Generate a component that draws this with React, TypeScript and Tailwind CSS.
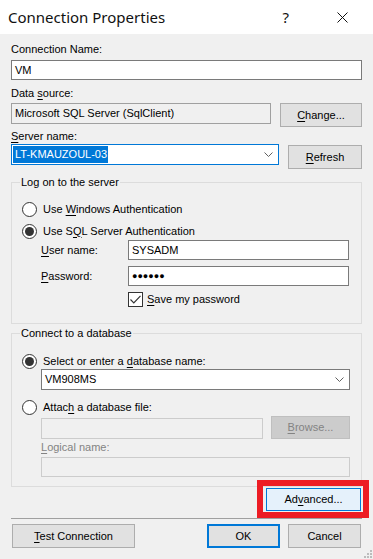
import React from 'react'

const U = ({ children }: { children: React.ReactNode }) => (
  <span className="underline underline-offset-[2px] decoration-1">{children}</span>
)

function Radio({ checked }: { checked?: boolean }) {
  return (
    <span className="w-[15px] h-[15px] rounded-full border border-[#333] bg-white flex items-center justify-center shrink-0">
      {checked && <span className="w-[9px] h-[9px] rounded-full bg-[#333]" />}
    </span>
  )
}

function Chevron() {
  return (
    <svg width="9" height="5" viewBox="0 0 9 5" className="shrink-0">
      <polyline points="0.5,0.5 4.5,4.5 8.5,0.5" fill="none" stroke="#606060" strokeWidth="1" />
    </svg>
  )
}

const btn =
  'h-[24px] bg-[#e1e1e1] border border-[#adadad] flex items-center justify-center shrink-0'

export default function App() {
  return (
    <div className="relative w-[373px] h-[559px] bg-[#f0f0f0] flex flex-col overflow-hidden text-black font-['Liberation_Sans',Arial,sans-serif] text-[11px] leading-[13px]">
      {/* Title bar */}
      <div className="h-[34px] bg-white flex items-center pl-[8px] shrink-0">
        <span className="flex-1 font-['Noto_Sans',sans-serif] text-[15px] leading-[20px] text-[#111]">
          Connection Properties
        </span>
        <span className="font-['Noto_Sans',sans-serif] text-[15px] leading-[20px] text-[#111]">?</span>
        <svg width="11" height="11" viewBox="0 0 11 11" className="ml-[48px] mr-[25px]">
          <path d="M0.5 0.5 L10.5 10.5 M10.5 0.5 L0.5 10.5" stroke="#111" strokeWidth="1" />
        </svg>
      </div>

      <div className="flex flex-col px-[11px]">
        <div className="mt-[9px]">Connection Name:</div>
        <div className="mt-[4px] h-[20px] bg-white border border-[#7a7a7a] flex items-center px-[3px]">VM</div>

        <div className="mt-[7px]">
          Data <U>s</U>ource:
        </div>
        <div className="mt-[3px] flex items-start gap-[9px]">
          <div className="h-[21px] w-[260px] bg-[#f0f0f0] border border-[#a0a0a0] flex items-center px-[3px]">
            Microsoft SQL Server (SqlClient)
          </div>
          <div className={`${btn} w-[82px]`}>
            <span>
              <U>C</U>hange...
            </span>
          </div>
        </div>

        <div className="mt-[3px]">
          <U>S</U>erver name:
        </div>
        <div className="mt-[1px] flex items-start gap-[9px]">
          <div className="h-[21px] w-[268px] bg-white border border-[#0078d7] flex items-stretch p-[1px]">
            <span className="bg-[#0078d7] text-white flex items-center pl-[2px] pr-[1px]">LT-KMAUZOUL-03</span>
            <span className="flex-1" />
            <span className="flex items-center mr-[4px]">
              <Chevron />
            </span>
          </div>
          <div className={`${btn} mt-[1px] h-[23px] w-[74px]`}>
            <span>
              <U>R</U>efresh
            </span>
          </div>
        </div>

        {/* Log on group */}
        <fieldset className="mt-[7px] border border-[#dcdcdc] pl-[10px] pr-[12px] pb-[16px]">
          <legend className="ml-[-2px] px-[1px] leading-[13px]">Log on to the server</legend>
          <div className="mt-[12px] h-[16px] flex items-center gap-[6px]">
            <Radio />
            <span>
              Use <U>W</U>indows Authentication
            </span>
          </div>
          <div className="mt-[6px] h-[16px] flex items-center gap-[6px]">
            <Radio checked />
            <span>
              Use S<U>Q</U>L Server Authentication
            </span>
          </div>
          <div className="mt-[1px] flex items-center pl-[19px]">
            <span className="w-[87px]">
              <U>U</U>ser name:
            </span>
            <div className="flex-1 h-[20px] bg-white border border-[#7a7a7a] flex items-center px-[3px]">SYSADM</div>
          </div>
          <div className="mt-[6px] flex items-center pl-[19px]">
            <span className="w-[87px]">
              <U>P</U>assword:
            </span>
            <div className="flex-1 h-[20px] bg-white border border-[#7a7a7a] flex items-center px-[3px] text-[9px] tracking-[0px]">
              ●●●●●●
            </div>
          </div>
          <div className="mt-[6px] flex items-center gap-[4px] pl-[106px]">
            <span className="w-[15px] h-[15px] bg-white border border-[#333] flex items-center justify-center">
              <svg width="11" height="9" viewBox="0 0 11 9">
                <polyline points="0.5,4.5 3.8,7.8 10.5,0.8" fill="none" stroke="#333" strokeWidth="1.2" />
              </svg>
            </span>
            <span>
              <U>S</U>ave my password
            </span>
          </div>
        </fieldset>

        {/* Connect group */}
        <fieldset className="mt-[3px] border border-[#dcdcdc] pl-[10px] pr-[11px] pb-[9px]">
          <legend className="ml-[-2px] px-[1px] leading-[13px]">Connect to a database</legend>
          <div className="mt-[14px] h-[15px] flex items-center gap-[6px]">
            <Radio checked />
            <span>
              Select or enter a <U>d</U>atabase name:
            </span>
          </div>
          <div className="ml-[19px] h-[21px] bg-white border border-[#7a7a7a] flex items-center pl-[3px] pr-[5px]">
            <span className="flex-1">VM908MS</span>
            <Chevron />
          </div>
          <div className="mt-[10px] h-[15px] flex items-center gap-[6px]">
            <Radio />
            <span>
              Attac<U>h</U> a database file:
            </span>
          </div>
          <div className="mt-[1px] ml-[19px] flex items-start justify-between">
            <div className="mt-[2px] h-[21px] w-[222px] bg-[#f0f0f0] border border-[#cccccc]" />
            <div className="h-[23px] w-[79px] bg-[#cccccc] border border-[#bfbfbf] flex items-center justify-center text-[#838383]">
              <span>
                <U>B</U>rowse...
              </span>
            </div>
          </div>
          <div className="mt-[2px] ml-[19px] text-[#838383]">
            <U>L</U>ogical name:
          </div>
          <div className="mt-[3px] ml-[19px] h-[20px] bg-[#f0f0f0] border border-[#cccccc]" />
        </fieldset>

        <div className="mt-[1px] flex justify-end pr-[1px]">
          <div className="relative">
            <div className="h-[23px] w-[95px] bg-[#e5f1fb] border border-[#0078d7] flex items-center justify-center">
              <span>
                Ad<U>v</U>anced...
              </span>
            </div>
            <div className="absolute -left-[9px] -top-[8px] -right-[8px] -bottom-[7px] border-[6px] border-[#ed1c24] pointer-events-none" />
          </div>
        </div>

        <div className="mt-[7px] h-px bg-[#a0a0a0]" />

        <div className="mt-[5px] flex items-start pr-[1px]">
          <div className={`${btn} ml-[1px] w-[123px]`}>
            <span>
              <U>T</U>est Connection
            </span>
          </div>
          <span className="flex-1" />
          <div className="h-[24px] w-[73px] bg-[#e1e1e1] border-2 border-[#0078d7] flex items-center justify-center">OK</div>
          <div className={`${btn} ml-[8px] w-[73px]`}>Cancel</div>
        </div>
      </div>

      {/* size grip */}
      <svg width="8" height="8" viewBox="0 0 8 8" className="absolute right-[1px] bottom-[1px]">
        <rect x="6" y="0" width="2" height="2" fill="#bcbcbc" />
        <rect x="3" y="3" width="2" height="2" fill="#bcbcbc" />
        <rect x="6" y="3" width="2" height="2" fill="#bcbcbc" />
        <rect x="0" y="6" width="2" height="2" fill="#bcbcbc" />
        <rect x="3" y="6" width="2" height="2" fill="#bcbcbc" />
        <rect x="6" y="6" width="2" height="2" fill="#bcbcbc" />
      </svg>
    </div>
  )
}
